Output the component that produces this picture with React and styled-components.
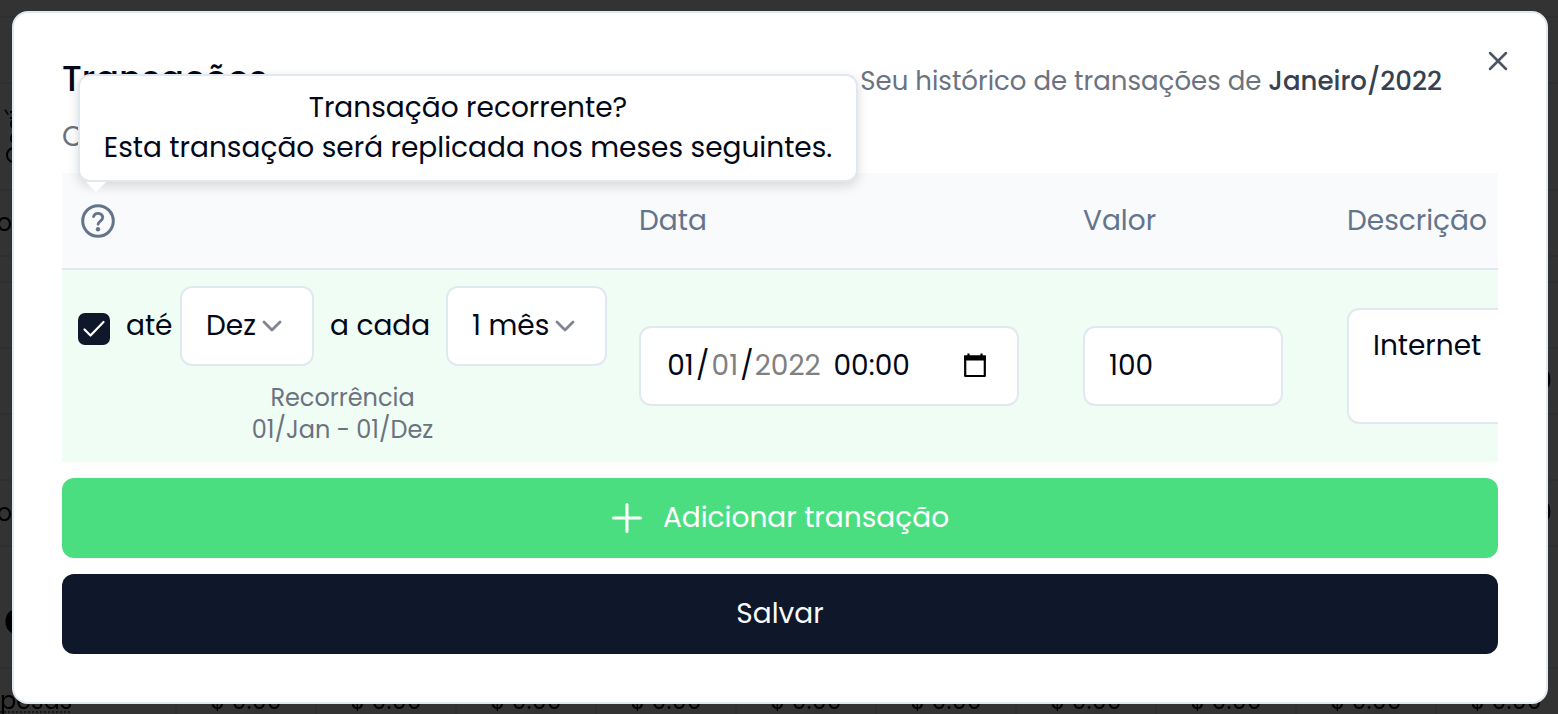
import React from "react";
import styled, { createGlobalStyle, css } from "styled-components";

const GlobalStyle = createGlobalStyle`
  *, *::before, *::after { box-sizing: border-box; }
  body {
    margin: 0;
    background: #fff;
    color: #020817;
    font-family: Poppins, Inter, "Liberation Sans", sans-serif;
    font-size: 28px;
    line-height: 40px;
    overflow: hidden;
  }
  button, input, select, textarea { font: inherit; color: inherit; }
`;

/* Budget page behind the dialog */
const Backdrop = styled.div`
  position: fixed;
  inset: 0;
  overflow: hidden;
`;
const BudgetRow = styled.div`
  display: flex;
  align-items: center;
  justify-content: space-between;
  height: ${(p) => p.$height}px;
  border-bottom: 2px solid #e2e8f0;
  color: #000;
`;
const Edge = styled.span`
  display: flex;
  justify-content: flex-end;
  width: 12px;
  font-size: 24px;
`;
const RightEdge = styled(Edge)`
  padding-right: 6px;
  font-weight: 500;
`;
const HeadingEdge = styled(Edge)`
  justify-content: flex-start;
  padding: 24px 0 0 4px;
  font-size: 48px;
  font-weight: 700;
`;
const VerticalEdge = styled(Edge)`
  writing-mode: sideways-lr;
  line-height: 32px;
`;
const TotalsRow = styled.div`
  display: grid;
  grid-template-columns: 177px repeat(10, 140px);
  height: 66px;
  font-size: 24px;
  line-height: 64px;
  color: #000;
`;
const TotalCell = styled.span`
  border-right: 2px solid #e2e8f0;
  text-align: ${(p) => (p.$first ? "left" : "center")};
`;
const Abbr = styled.span`
  text-decoration: underline dotted #64748b 2px;
  text-underline-offset: 2px;
  text-decoration-skip-ink: none;
`;

const Overlay = styled.div`
  position: fixed;
  inset: 0;
  padding: 11px 10px 10px 12px;
  background: rgba(0, 0, 0, 0.8);
`;
const Dialog = styled.section`
  position: relative;
  padding: 48px;
  background: #fff;
  border: 2px solid #e2e8f0;
  border-radius: 16px;
`;
const CloseButton = styled.button`
  position: absolute;
  top: 38px;
  right: 38px;
  display: flex;
  padding: 0;
  border: 0;
  background: none;
  color: #4b5563;
`;
const Header = styled.header`
  height: 112px;
  color: #6b7280;
`;
const HeaderLine = styled.div`
  display: flex;
  align-items: flex-start;
  justify-content: space-between;
  padding-right: 56px;
`;
const Title = styled.h2`
  margin: 0;
  color: #020817;
  font-size: 35px;
  font-weight: 500;
  line-height: 36px;
`;
const Text = styled.p`
  margin: 0;
`;
const Subtitle = styled(Text)`
  font-size: 26px;
`;
const Lead = styled(Text)`
  margin-top: 16px;
`;
const Month = styled.strong`
  color: #374151;
  font-weight: 500;
`;

const TableArea = styled.div`
  position: relative;
  margin-bottom: 16px;
`;
const Scroller = styled.div`
  overflow: hidden;
`;
const Table = styled.table`
  width: 1680px;
  table-layout: fixed;
  border-collapse: separate;
  border-spacing: 0;
`;
const Th = styled.th`
  width: ${(p) => p.$width};
  height: 97px;
  padding: 0 16px;
  background: #f8fafc;
  border-bottom: 2px solid #e2e8f0;
  color: #64748b;
  font-weight: 400;
  text-align: left;
`;
const Td = styled.td`
  height: 192px;
  padding: 16px;
  background: #f0fdf4;
`;
const HelpButton = styled.button`
  display: flex;
  padding: 0;
  border: 0;
  background: none;
  color: #64748b;
`;

const Tooltip = styled.div`
  position: absolute;
  left: 16px;
  bottom: calc(100% - 9px);
  z-index: 1;
  width: 780px;
  padding: 12px 16px;
  background: #fff;
  border: 2px solid #e2e8f0;
  border-radius: 12px;
  box-shadow: 0 4px 12px rgba(0, 0, 0, 0.14);
  text-align: center;
  white-space: nowrap;
`;
const Arrow = styled.svg`
  position: absolute;
  top: calc(100% + 2px);
  left: 6px;
`;

const field = css`
  height: 80px;
  background: #fff;
  border: 2px solid #e2e8f0;
  border-radius: 12px;
`;
const Recurrence = styled.div`
  display: flex;
  align-items: center;
  gap: 16px;
`;
const CheckLabel = styled.label`
  position: relative;
  display: flex;
  margin-top: 6px;
`;
const Check = styled.input`
  appearance: none;
  width: 32px;
  height: 32px;
  margin: 0;
  border-radius: 7px;
  background: #0f172a;
`;
const CheckMark = styled.svg`
  position: absolute;
  inset: 0;
  pointer-events: none;
`;
const SelectLabel = styled.label`
  display: flex;
  align-items: center;
  justify-content: space-between;
  width: ${(p) => p.$width}px;
`;
const SelectBox = styled.span`
  position: relative;
  width: ${(p) => p.$width}px;
`;
const Select = styled.select`
  ${field}
  display: block;
  width: 100%;
  padding: 0 0 0 24px;
  appearance: none;
`;
const Chevron = styled.svg`
  position: absolute;
  top: 34px;
  right: 32px;
  pointer-events: none;
`;
const Note = styled.p`
  margin: 16px 0 0;
  color: #6b7280;
  font-size: 24px;
  line-height: 32px;
  text-align: center;
`;
const DateBox = styled.div`
  ${field}
  display: flex;
  align-items: center;
  width: 380px;
  padding: 0 30px 0 24px;
`;
const Segment = styled.input`
  width: ${(p) => p.$width}px;
  margin: 0 ${(p) => p.$after || 0}px 0 0;
  padding: 0;
  border: 0;
  background: none;
  text-align: center;
  &:disabled { color: #808080; }
`;
const CalendarButton = styled.button`
  display: flex;
  margin-left: auto;
  padding: 0;
  border: 0;
  background: none;
  color: #000;
`;
const Input = styled.input`
  ${field}
  display: block;
  width: 200px;
  padding: 0 24px;
`;
const TextArea = styled.textarea`
  ${field}
  display: block;
  width: 100%;
  height: 116px;
  padding: 16px 24px;
  resize: none;
`;
const ActionButton = styled.button`
  display: flex;
  align-items: center;
  justify-content: center;
  gap: 20px;
  width: 100%;
  height: 80px;
  padding: 0;
  border: 0;
  border-radius: 12px;
  background: ${(p) => (p.$primary ? "#0f172a" : "#4ade80")};
  color: ${(p) => (p.$primary ? "#f8fafc" : "#fff")};
  & + & { margin-top: 16px; }
`;

const budgetRows = [
  { height: 18 },
  { height: 66 },
  { height: 107, left: <VerticalEdge>Ocaí</VerticalEdge> },
  { height: 66, left: <Edge>o</Edge> },
  { height: 26 },
  { height: 66 },
  { height: 66, right: "0" },
  { height: 66 },
  { height: 66, left: <Edge>o</Edge>, right: "0" },
  { height: 122, left: <HeadingEdge>o</HeadingEdge> },
];

function Dropdown({ label, labelWidth, width, options }) {
  return (
    <SelectLabel $width={labelWidth}>
      {label}
      <SelectBox $width={width}>
        <Select>
          {options.map((o) => <option key={o}>{o}</option>)}
        </Select>
        <Chevron width="20" height="13" viewBox="0 0 20 13" fill="none" stroke="#808591" strokeWidth="2.8" strokeLinecap="round" strokeLinejoin="round" aria-hidden="true">
          <path d="M2 2l8 8L18 2" />
        </Chevron>
      </SelectBox>
    </SelectLabel>
  );
}

export default function App() {
  return (
    <>
      <GlobalStyle />
      <Backdrop aria-hidden="true">
        {budgetRows.map((r, i) => (
          <BudgetRow key={i} $height={r.height}>
            {r.left || <Edge />}
            <RightEdge>{r.right}</RightEdge>
          </BudgetRow>
        ))}
        <TotalsRow>
          <TotalCell $first><Abbr>pesas</Abbr></TotalCell>
          {Array.from({ length: 10 }, (_, i) => <TotalCell key={i}>$ 0.00</TotalCell>)}
        </TotalsRow>
      </Backdrop>
      <Overlay>
        <Dialog role="dialog" aria-labelledby="dialog-title">
          <Header>
            <HeaderLine>
              <Title id="dialog-title">Transações</Title>
              <Subtitle>Seu histórico de transações de <Month>Janeiro/2022</Month></Subtitle>
            </HeaderLine>
            <Lead>C</Lead>
          </Header>
          <CloseButton aria-label="Fechar">
            <svg width="20" height="20" viewBox="0 0 20 20" fill="none" stroke="currentColor" strokeWidth="2.5" strokeLinecap="round">
              <path d="M2 2l16 16M18 2L2 18" />
            </svg>
          </CloseButton>
          <TableArea>
            <Tooltip role="tooltip">
              Transação recorrente?<br />
              Esta transação será replicada nos meses seguintes.
              <Arrow width="20" height="10" viewBox="0 0 20 10" aria-hidden="true"><path d="M0 0h20L10 10z" fill="#fff" /></Arrow>
            </Tooltip>
            <Scroller>
              <Table>
                <thead>
                  <tr>
                    <Th $width="561px">
                      <HelpButton aria-label="Transação recorrente?">
                        <svg width="40" height="40" viewBox="0 0 40 40" fill="none" stroke="currentColor" strokeWidth="3" strokeLinecap="round" strokeLinejoin="round">
                          <circle cx="20" cy="20" r="15.3" />
                          <path d="M15.5 15.6a4.8 4.8 0 0 1 9.3 .7c0 3.6-4.6 3.8-4.7 7" strokeWidth="2.8" />
                          <circle cx="20" cy="28.3" r="2.2" fill="currentColor" stroke="none" />
                        </svg>
                      </HelpButton>
                    </Th>
                    <Th $width="444px">Data</Th>
                    <Th $width="264px">Valor</Th>
                    <Th>Descrição</Th>
                  </tr>
                </thead>
                <tbody>
                  <tr>
                    <Td>
                      <Recurrence>
                        <CheckLabel>
                          <Check type="checkbox" defaultChecked aria-label="Transação recorrente" />
                          <CheckMark width="32" height="32" viewBox="0 0 32 32" fill="none" stroke="#fff" strokeWidth="2.2" strokeLinecap="round" strokeLinejoin="round" aria-hidden="true">
                            <path d="M6.5 16.5l6 6L25.5 9" />
                          </CheckMark>
                        </CheckLabel>
                        <Dropdown label="até" labelWidth={188} width={134} options={["Dez"]} />
                        <Dropdown label="a cada" labelWidth={277} width={161} options={["1 mês"]} />
                      </Recurrence>
                      <Note>Recorrência<br />01/Jan - 01/Dez</Note>
                    </Td>
                    <Td>
                      <DateBox role="group" aria-label="Data">
                        <Segment $width={31} defaultValue="01" aria-label="Dia" />/
                        <Segment $width={31} defaultValue="01" aria-label="Mês" disabled />/
                        <Segment $width={68} $after={8} defaultValue="2022" aria-label="Ano" disabled />
                        <Segment $width={84} defaultValue="00:00" aria-label="Hora" />
                        <CalendarButton aria-label="Abrir calendário">
                          <svg width="24" height="26" viewBox="0 0 24 26" fill="none" stroke="currentColor" strokeWidth="2.2" strokeLinejoin="round" aria-hidden="true">
                            <path d="M2.2 3.5h19.6v19.5H2.2z" />
                            <path d="M1 2.500h22v5H1z" fill="currentColor" stroke="none" />
                            <path d="M5.5 .5v4M18.5 .5v4" />
                          </svg>
                        </CalendarButton>
                      </DateBox>
                    </Td>
                    <Td><Input defaultValue="100" aria-label="Valor" /></Td>
                    <Td><TextArea defaultValue="Internet" aria-label="Descrição" /></Td>
                  </tr>
                </tbody>
              </Table>
            </Scroller>
          </TableArea>
          <ActionButton>
            <svg width="32" height="32" viewBox="0 0 32 32" fill="none" stroke="currentColor" strokeWidth="3" strokeLinecap="round" aria-hidden="true">
              <path d="M16 2.5v27M2.5 16h27" />
            </svg>
            Adicionar transação
          </ActionButton>
          <ActionButton $primary>Salvar</ActionButton>
        </Dialog>
      </Overlay>
    </>
  );
}
